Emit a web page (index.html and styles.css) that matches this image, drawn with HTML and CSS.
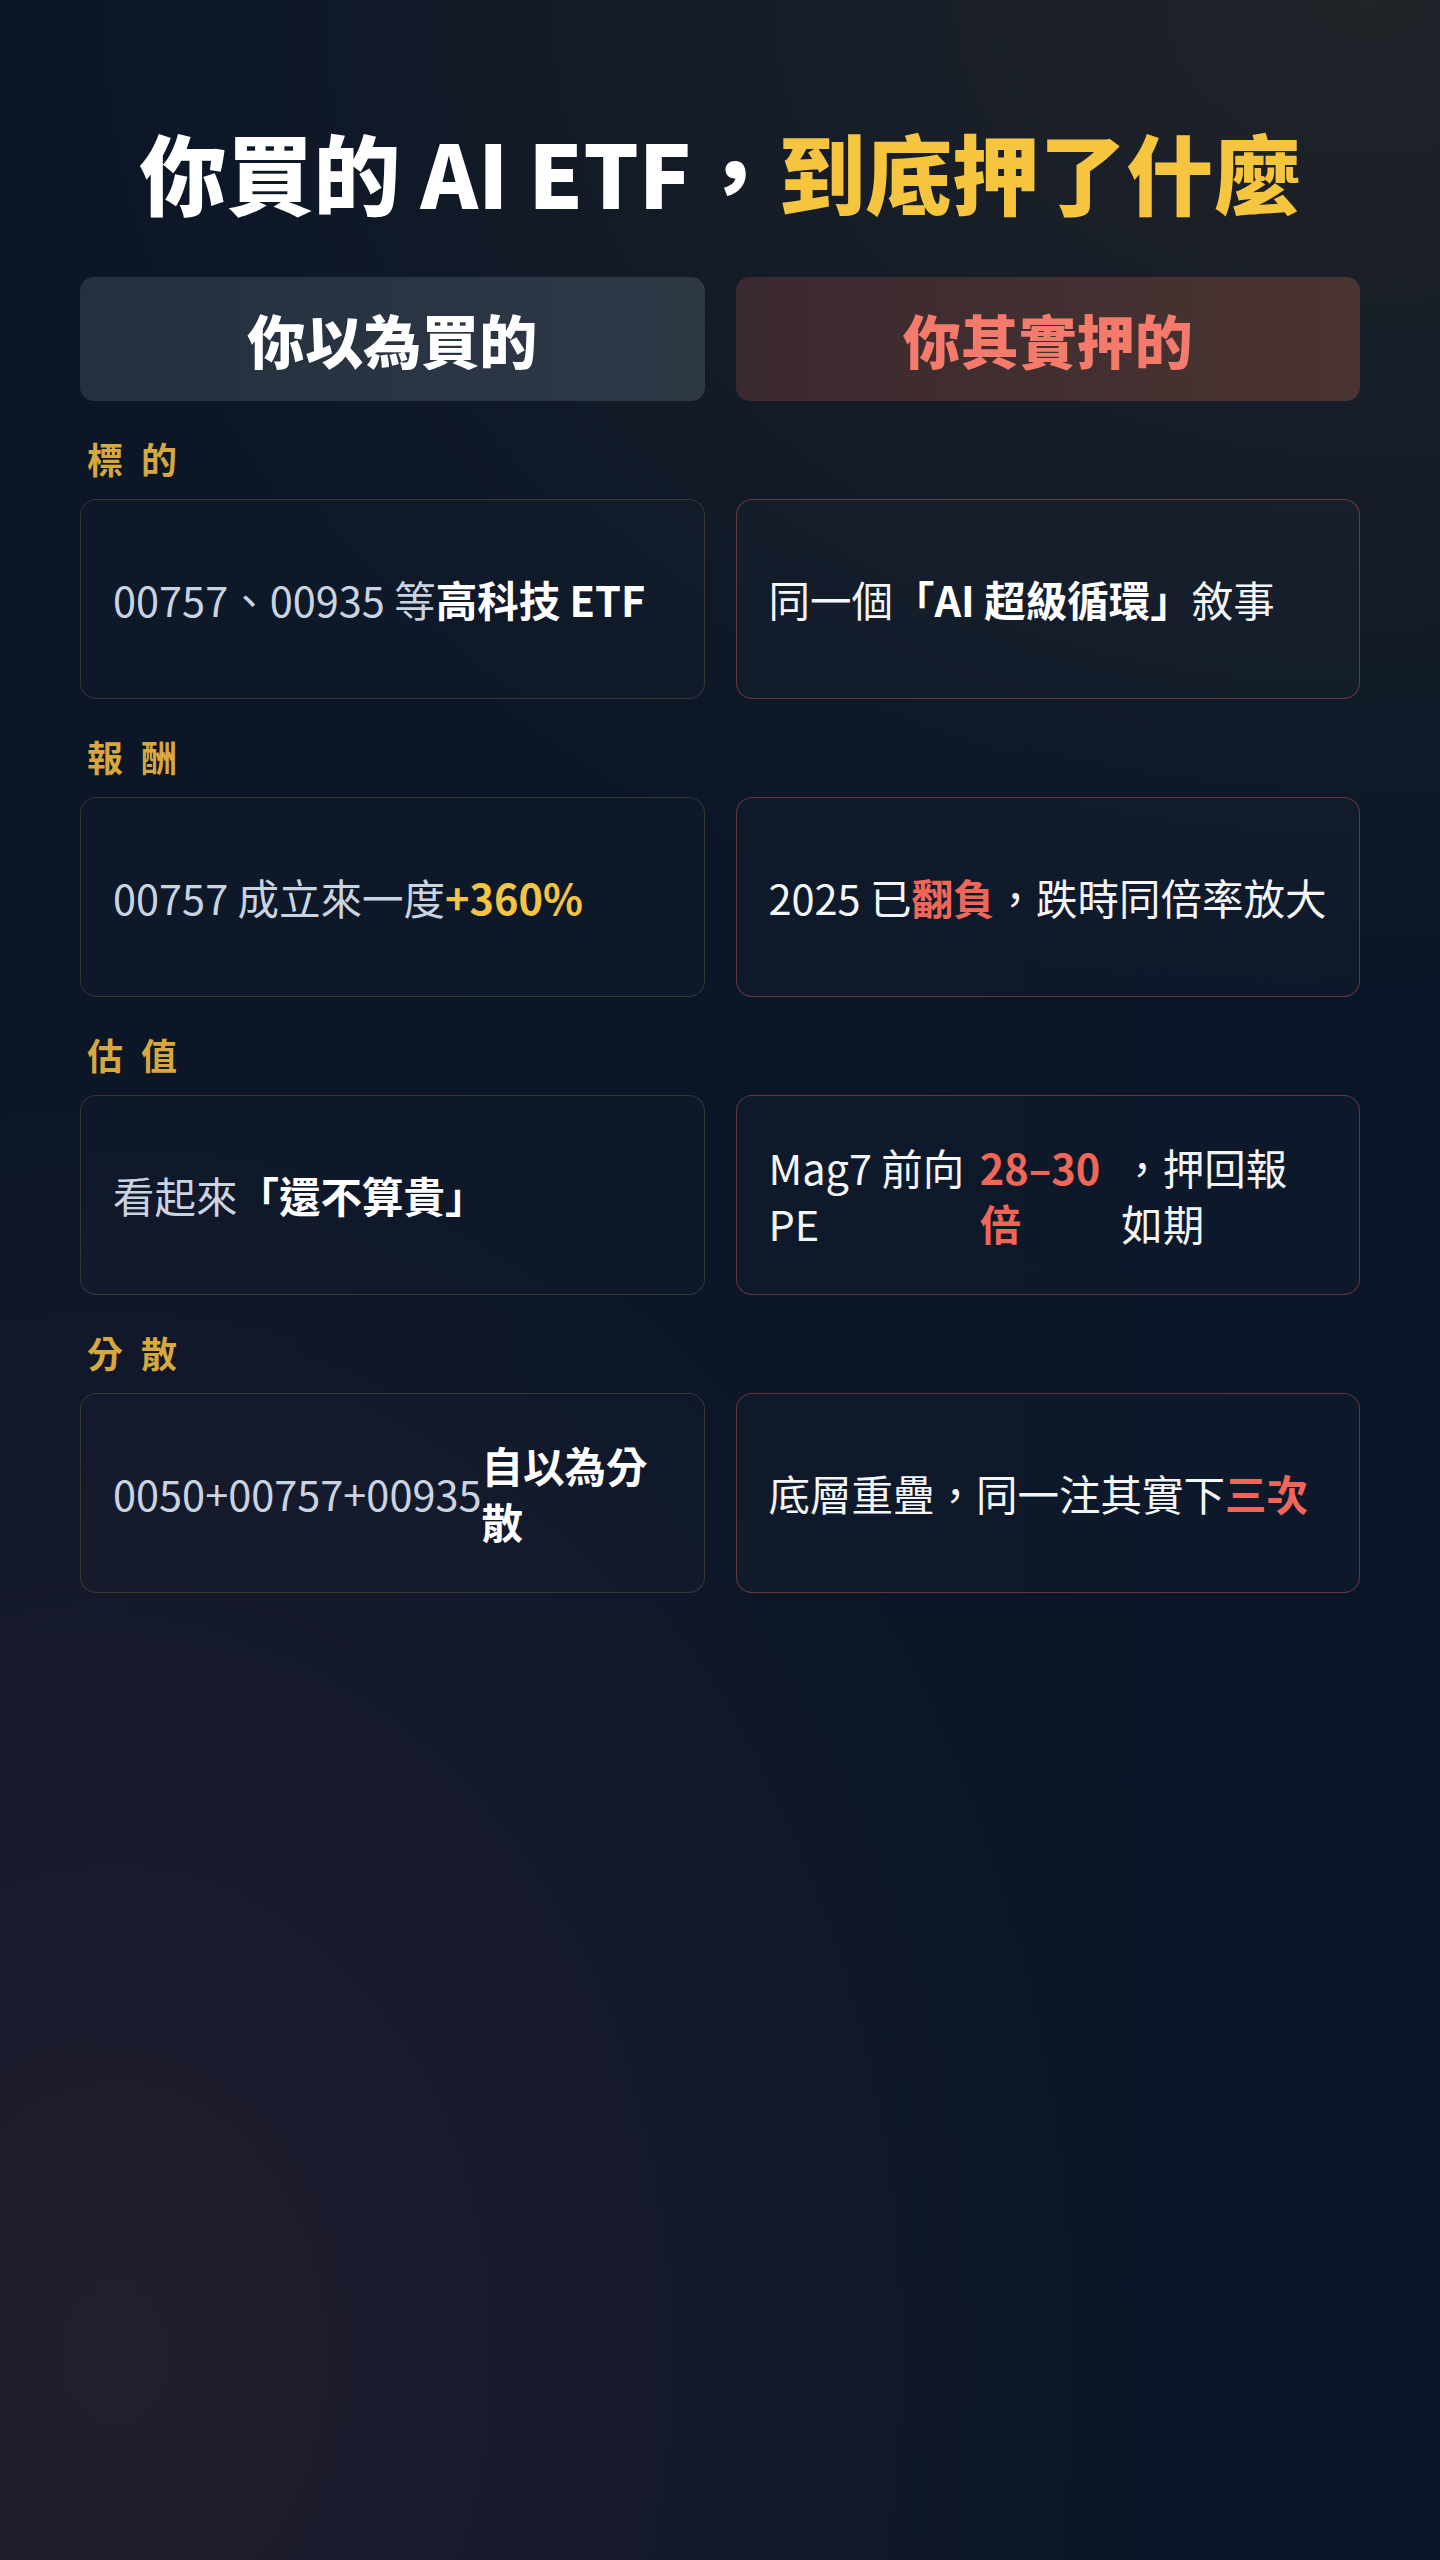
FILE: index.html
```html
<!DOCTYPE html>
<html lang="zh-Hant">
<head>
  <meta charset="UTF-8">
  <meta name="viewport" content="width=device-width, initial-scale=1.0">
  <title>你買的 AI ETF，到底押了什麼</title>
  <link rel="stylesheet" href="styles.css">
</head>
<body>
  <main class="page">
    <h1 class="title">你買的 AI ETF，<span class="accent">到底押了什麼</span></h1>

    <div class="heads">
      <div class="head head-think">你以為買的</div>
      <div class="head head-real">你其實押的</div>
    </div>

    <section class="row">
      <h2 class="label">標的</h2>
      <div class="pair">
        <div class="card card-think">00757、00935 等<b>高科技 ETF</b></div>
        <div class="card card-real">同一個<b>「AI 超級循環」</b>敘事</div>
      </div>
    </section>

    <section class="row">
      <h2 class="label">報酬</h2>
      <div class="pair">
        <div class="card card-think">00757 成立來一度<b class="gold">+360%</b></div>
        <div class="card card-real">2025 已<b class="red">翻負</b>，跌時同倍率放大</div>
      </div>
    </section>

    <section class="row">
      <h2 class="label">估值</h2>
      <div class="pair">
        <div class="card card-think">看起來<b>「還不算貴」</b></div>
        <div class="card card-real">Mag7 前向 PE <b class="red">28–30 倍</b>，押回報如期</div>
      </div>
    </section>

    <section class="row">
      <h2 class="label">分散</h2>
      <div class="pair">
        <div class="card card-think">0050+00757+00935<b>自以為分散</b></div>
        <div class="card card-real">底層重疊，同一注其實下<b class="red">三次</b></div>
      </div>
    </section>
  </main>
</body>
</html>
```

FILE: styles.css
```css
body {
  margin: 0;
  background: #0a1627;
  color: #fff;
  font-family: "Noto Sans CJK TC", "Noto Sans", sans-serif;
}

.page {
  box-sizing: border-box;
  min-height: 2560px;
  padding: 119px 80px 0;
  background:
    radial-gradient(ellipse 1300px 1000px at 95% 0%, #202328 0%, rgba(32, 35, 40, 0) 100%),
    radial-gradient(ellipse 1000px 1300px at 8% 92%, #211e2f 0%, rgba(33, 30, 47, 0) 100%),
    linear-gradient(90deg, #0c1627 0%, #0a1627 100%);
}

.title {
  margin: 0 0 54px;
  font-size: 87px;
  font-weight: 900;
  line-height: 1.2;
  text-align: center;
  color: #fff;
}
.title .accent { color: #f5c53f; }

.heads {
  display: grid;
  grid-template-columns: 1fr 1fr;
  gap: 31px;
}
.head {
  height: 124px;
  border-radius: 14px;
  display: flex;
  align-items: center;
  justify-content: center;
  font-size: 58px;
  font-weight: 900;
}
.head-think {
  background: linear-gradient(90deg, #243040 0%, #2f3845 100%);
  color: #fff;
}
.head-real {
  background: linear-gradient(90deg, #3a292f 0%, #4a3431 100%);
  color: #f47a6c;
}

.row { margin-top: 30px; }

.label {
  margin: 0 0 14px 7px;
  font-size: 36px;
  font-weight: 700;
  line-height: 54px;
  letter-spacing: 18px;
  color: #d6a83f;
}

.pair {
  display: grid;
  grid-template-columns: 1fr 1fr;
  gap: 31px;
}

.card {
  box-sizing: border-box;
  height: 200px;
  padding: 0 32px;
  border-radius: 16px;
  display: flex;
  align-items: center;
  font-size: 41.5px;
  line-height: 1.35;
  font-weight: 400;
}
.card b { font-weight: 700; color: #fff; }
.card-think {
  border: 1.5px solid rgba(214, 170, 80, 0.2);
  background: rgba(255, 255, 255, 0.01);
  color: #cad4e1;
}
.card-real {
  border: 1.5px solid rgba(236, 102, 92, 0.38);
  background: rgba(255, 255, 255, 0.015);
  color: #f4f5f7;
}
.card b.gold { color: #f5c542; }
.card b.red { color: #f2665a; }
```
